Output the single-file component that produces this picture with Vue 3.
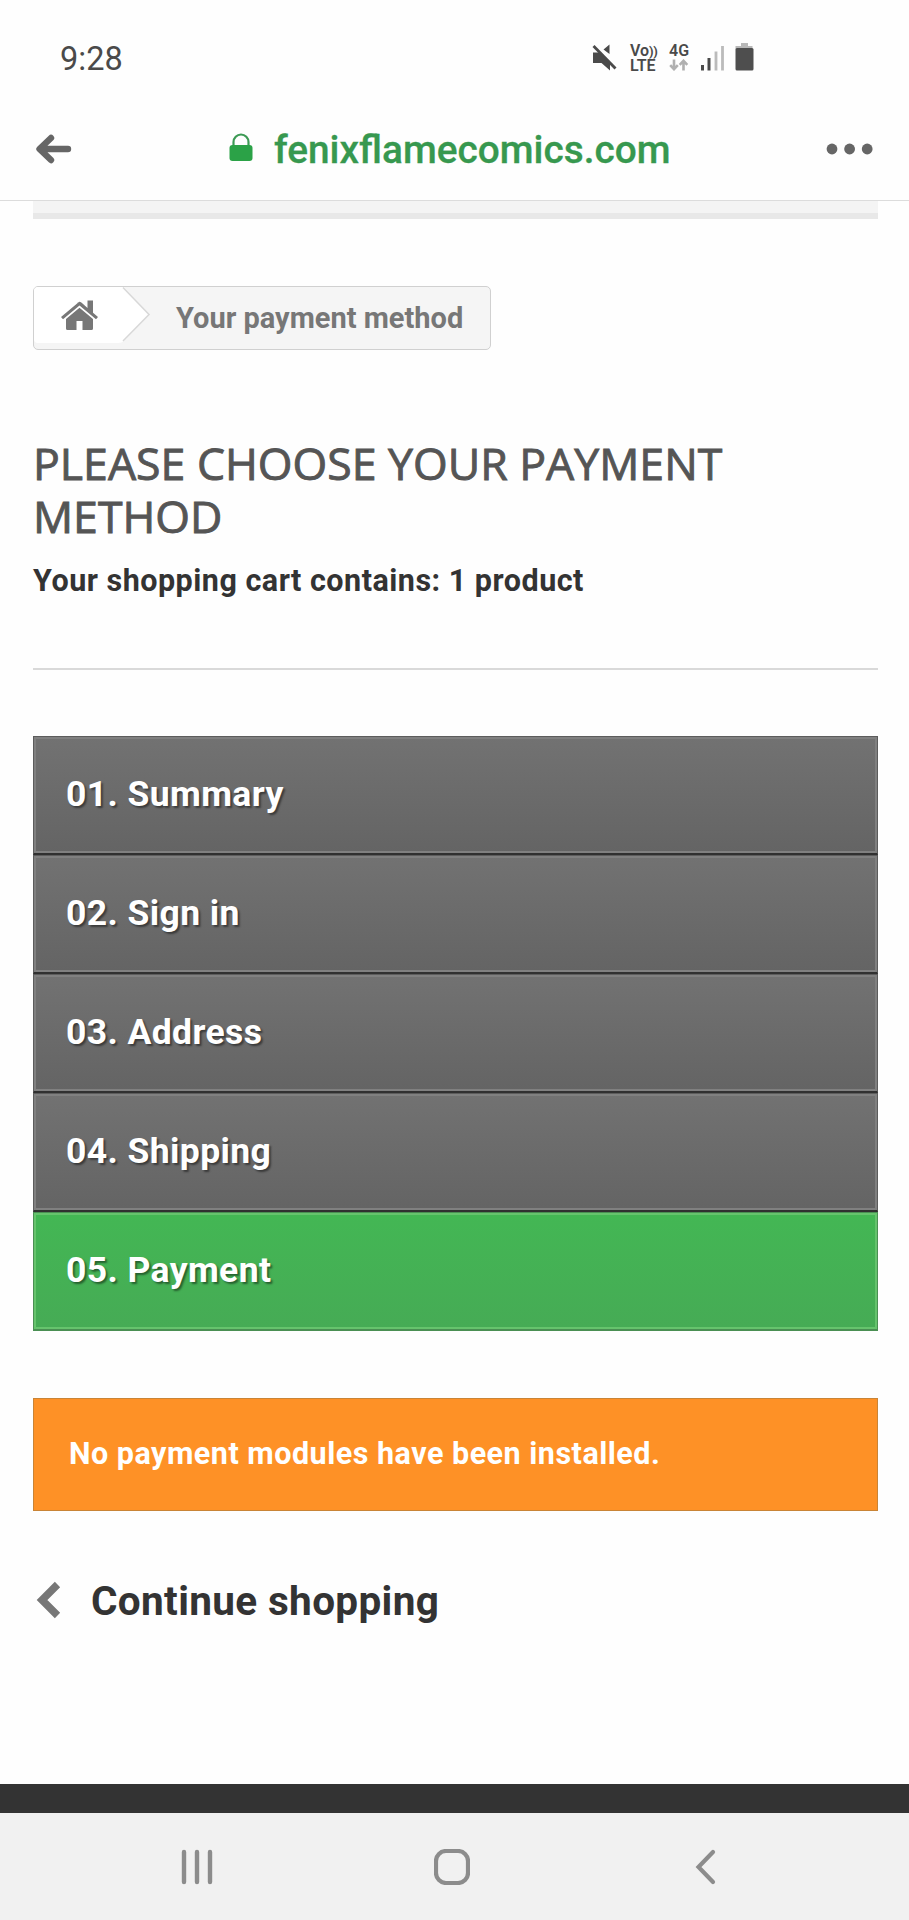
<template>
  <div class="screen">
    <header class="status">
      <span class="clock">9:28</span>
      <div class="indicators">
        <svg class="mute" width="26" height="30" viewBox="0 0 26 30">
          <path d="M1 9.500h8L18 18.500v9L9.500 20H1zM17.500 1.500v9.500l-6-4.500z" fill="#4a4a4a" />
          <path d="M3 1l22 21.500" stroke="#fefefe" stroke-width="2" />
          <path d="M1.500 3L23.500 25.500" stroke="#4a4a4a" stroke-width="2.800" />
        </svg>
        <div class="volte">
          <span>Vo<i>))</i></span>
          <span>LTE</span>
        </div>
        <div class="network">
          <span>4G</span>
          <svg width="20" height="12" viewBox="0 0 20 12">
            <path d="M5 .5V10M1.200 6.200L5 10.200l3.800-4M14.500 11.500V2M10.700 5.800l3.800-4 3.800 4" fill="none" stroke="#b0b0b0" stroke-width="2.600" />
          </svg>
        </div>
        <svg class="signal" width="24" height="28" viewBox="0 0 24 28">
          <path d="M1.500 21v5.500M8 14v12.500" stroke="#4a4a4a" stroke-width="3" />
          <path d="M15 7.500v19M21.500 2v24.500" stroke="#bbb" stroke-width="2.800" />
        </svg>
        <svg class="battery" width="19" height="28" viewBox="0 0 19 28">
          <path d="M6 0h7v3h4.500v3h-17V3H6z" fill="#b8b8b8" />
          <rect x=".5" y="5" width="18" height="22.500" rx="1.500" fill="#4e4e4e" />
        </svg>
      </div>
    </header>

    <nav class="address">
      <svg class="back" width="36" height="30" viewBox="0 0 36 30">
        <path d="M32 15H4M15 4L3.500 15l11.500 11" fill="none" stroke="#666" stroke-width="6.400" stroke-linecap="round" stroke-linejoin="round" />
      </svg>
      <svg class="lock" width="24" height="28" viewBox="0 0 24 28">
        <path d="M4.500 14V9a7.500 7.500 0 0 1 15 0v5" fill="none" stroke="#3c9a55" stroke-width="2.200" />
        <rect x=".5" y="12" width="23" height="16" rx="3" fill="#2ba247" />
      </svg>
      <span class="url">fenixflamecomics.com</span>
      <svg class="more" width="48" height="12" viewBox="0 0 48 12">
        <circle v-for="x in [6, 23.6, 41.2]" :key="x" :cx="x" cy="6" r="5.400" fill="#666" />
      </svg>
    </nav>

    <main class="page">
      <div class="search-edge"></div>

      <div class="breadcrumb">
        <svg class="crumb-home" width="118" height="62" viewBox="0 0 118 62">
          <path d="M4 0H90L115 27.500 90 54Q88 56 84 56H4Q0 56 0 52V4Q0 0 4 0z" fill="#fff" />
          <path d="M89 .5L115 27.500 89 54" fill="none" stroke="#d8d8d8" stroke-width="1.500" />
          <g fill="#777" transform="translate(0 -1)">
            <path d="M45.500 15.500l-18.500 15.500 2 2.300L45.500 19.500 62 33.300l2-2.300-5-4.200V14.500h-5.500v7.500l-5-4.500q-3-3.500-6 0z" />
            <path d="M45.500 21.800L32 33v9.500q0 1.500 1.500 1.500h9v-9h6v9h9q1.500 0 1.500-1.500V33z" />
          </g>
        </svg>
        <span class="crumb-label">Your payment method</span>
      </div>

      <h1 class="title">Please choose your payment method</h1>
      <p class="cart-info">Your shopping cart contains: 1 product</p>

      <ul class="steps">
        <li v-for="(step, i) in steps" :key="step" :class="{ current: i === steps.length - 1 }">
          <span>0{{ i + 1 }}. {{ step }}</span>
        </li>
      </ul>

      <p class="alert"><span>No payment modules have been installed.</span></p>

      <a class="continue">
        <svg width="26" height="38" viewBox="0 0 26 38">
          <path d="M21.500 3.500L6 19l15.500 15.500" fill="none" stroke="#777" stroke-width="7.500" />
        </svg>
        <span>Continue shopping</span>
      </a>
    </main>

    <div class="site-footer"></div>

    <footer class="system-nav">
      <svg class="recents" width="32" height="36" viewBox="0 0 32 36">
        <path d="M3 3v30M16 3v30M29 3v30" stroke="#8c8c8c" stroke-width="4.400" stroke-linecap="round" />
      </svg>
      <svg class="home" width="36" height="36" viewBox="0 0 36 36">
        <rect x="2" y="2" width="32" height="32" rx="10" fill="none" stroke="#8c8c8c" stroke-width="4.200" />
      </svg>
      <svg class="prev" width="22" height="36" viewBox="0 0 22 36">
        <path d="M18 3L3.500 18 18 33" fill="none" stroke="#8c8c8c" stroke-width="4.200" stroke-linecap="round" />
      </svg>
    </footer>
  </div>
</template>

<script setup>
const steps = ["Summary", "Sign in", "Address", "Shipping", "Payment"];
</script>

<style>
body {
  margin: 0;
  background: #fefefe;
}
</style>

<style scoped>
.screen {
  display: flex;
  flex-direction: column;
  width: 909px;
  height: 1920px;
  overflow: hidden;
  background: #fefefe;
  color: #333;
  font-family: Roboto, "Liberation Sans", sans-serif;
}

svg {
  display: block;
  flex: none;
}

span {
  white-space: nowrap;
}

.status {
  display: flex;
  height: 98px;
  flex: none;
}

.clock {
  width: 532px;
  padding: 40px 0 0 60px;
  color: #4a4a4a;
  font-size: 32.500px;
  line-height: 39px;
}

.indicators {
  display: flex;
  align-items: flex-start;
  padding-top: 43px;
}

.volte {
  display: flex;
  flex-direction: column;
  width: 26px;
  margin: 0 0 0 12px;
  color: #4a4a4a;
  font-size: 16px;
  font-weight: 600;
  line-height: 15px;
}

.volte i {
  font-size: 13px;
  font-style: normal;
  font-weight: 700;
  letter-spacing: -0.5px;
  line-height: 1;
}

.volte span {
  height: 15px;
}

.network {
  width: 20px;
  margin: 0 0 0 13px;
  color: #4a4a4a;
  font-size: 16px;
  font-weight: 600;
  line-height: 15px;
}

.network span {
  display: block;
  height: 16px;
}

.signal {
  margin: 1px 0 0 12px;
}

.battery {
  margin-left: 10px;
}

.address {
  display: flex;
  align-items: center;
  height: 102px;
  flex: none;
  border-bottom: 1px solid #dcdcdc;
}

.back {
  margin-left: 36px;
}

.lock {
  margin-left: 157px;
  margin-bottom: 4px;
}

.url {
  width: 394px;
  margin-left: 21px;
  color: #37984f;
  font-size: 38.800px;
  font-weight: 500;
  -webkit-text-stroke: 0.300px #37984f;
}

.more {
  margin-left: 158px;
}

.page {
  width: 844.500px;
  height: 1583px;
  flex: none;
  margin-left: 33px;
}

.search-edge {
  height: 12px;
  border-bottom: 6px solid #e8e8e8;
  background: #f4f4f4;
}

.breadcrumb {
  box-sizing: border-box;
  display: flex;
  width: 458px;
  height: 64px;
  margin-top: 67px;
  border: 1.500px solid #d0d0d0;
  border-radius: 5px;
  background: #f5f5f5;
}

.crumb-label {
  margin-left: 24px;
  color: #777;
  font-size: 29px;
  font-weight: 700;
  line-height: 62px;
}

.title {
  margin: 86px 0 0;
  color: #555;
  font-family: "Open Sans", "Noto Sans", sans-serif;
  font-size: 44.600px;
  font-weight: 500;
  line-height: 53px;
  text-transform: uppercase;
  -webkit-text-stroke: 0.900px #555;
}

.cart-info {
  height: 105px;
  margin: 15px 0 0;
  padding-top: 6px;
  border-bottom: 2px solid #d9d9d9;
  font-size: 30.500px;
  font-weight: 700;
  letter-spacing: 0.500px;
  line-height: 36px;
}

.steps {
  margin: 66px 0 0;
  padding: 0;
  list-style: none;
}

.steps li {
  box-sizing: border-box;
  height: 119px;
  padding-left: 32px;
  border: 1.500px solid #5c5c5c;
  border-bottom: 2px solid #303030;
  box-shadow: inset 0 0 0 2px #808080;
  background: linear-gradient(#727272, #646464);
  color: #fff;
  font-size: 35.500px;
  font-weight: 700;
  letter-spacing: 0.400px;
  line-height: 115px;
  text-shadow: 2px 2px 2px rgba(0, 0, 0, 0.45);
}

.steps li.current {
  border-color: #4a8f53;
  box-shadow: inset 0 0 0 2px #66c36d;
  background: linear-gradient(#43b754, #46ab55);
}

.alert {
  box-sizing: border-box;
  height: 113px;
  margin: 67px 0 0;
  padding-left: 35px;
  border: 1.500px solid #c98436;
  background: #fe9126;
  color: #fff;
  font-size: 30.500px;
  font-weight: 700;
  letter-spacing: 0.500px;
  line-height: 110px;
}

.continue {
  display: flex;
  align-items: center;
  height: 60px;
  margin-top: 59px;
  font-size: 40.500px;
  font-weight: 700;
  letter-spacing: 0.350px;
}

.continue svg {
  margin-left: 3px;
}

.continue span {
  margin-left: 29px;
  padding-top: 2px;
}

.site-footer {
  height: 29px;
  flex: none;
  background: #333;
}

.system-nav {
  display: flex;
  align-items: flex-start;
  height: 71px;
  padding: 36px 0 0 181px;
  background: #f1f1f1;
}

.home {
  margin-left: 221px;
}

.prev {
  margin-left: 225px;
}
</style>
